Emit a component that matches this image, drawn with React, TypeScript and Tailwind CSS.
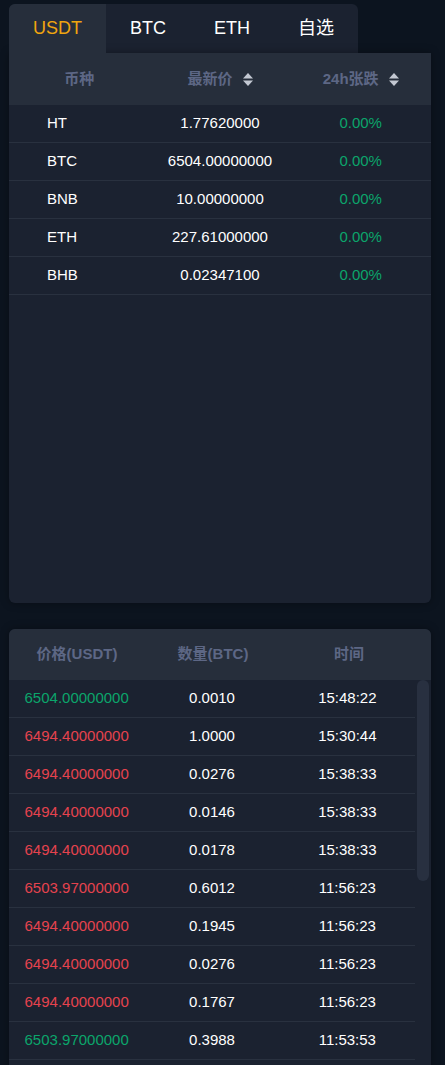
import React from 'react';

const coins = [
  { name: 'HT', price: '1.77620000', change: '0.00%' },
  { name: 'BTC', price: '6504.00000000', change: '0.00%' },
  { name: 'BNB', price: '10.00000000', change: '0.00%' },
  { name: 'ETH', price: '227.61000000', change: '0.00%' },
  { name: 'BHB', price: '0.02347100', change: '0.00%' },
];

const trades = [
  { price: '6504.00000000', up: true, amount: '0.0010', time: '15:48:22' },
  { price: '6494.40000000', up: false, amount: '1.0000', time: '15:30:44' },
  { price: '6494.40000000', up: false, amount: '0.0276', time: '15:38:33' },
  { price: '6494.40000000', up: false, amount: '0.0146', time: '15:38:33' },
  { price: '6494.40000000', up: false, amount: '0.0178', time: '15:38:33' },
  { price: '6503.97000000', up: false, amount: '0.6012', time: '11:56:23' },
  { price: '6494.40000000', up: false, amount: '0.1945', time: '11:56:23' },
  { price: '6494.40000000', up: false, amount: '0.0276', time: '11:56:23' },
  { price: '6494.40000000', up: false, amount: '0.1767', time: '11:56:23' },
  { price: '6503.97000000', up: true, amount: '0.3988', time: '11:53:53' },
];

const tabs = ['USDT', 'BTC', 'ETH', '自选'];

// up/down sort arrows
const SortIcon = () => (
  <svg width="10" height="13" viewBox="0 0 10 13" className="ml-[10px] inline-block">
    <path d="M5 0 L10 5.5 L0 5.5 Z" fill="#c3c8d2" />
    <path d="M5 13 L10 7.5 L0 7.5 Z" fill="#c3c8d2" />
  </svg>
);

const App = () => {
  return (
    <div
      className="h-[1065px] w-[445px] overflow-hidden bg-[#0c141f] pt-[4px]"
      style={{ fontFamily: '"Liberation Sans", Arial, "Noto Sans CJK SC", sans-serif' }}
    >
      {/* market panel */}
      <div className="ml-[9px] w-[422px]">
        <div className="flex w-fit overflow-hidden rounded-t-md bg-[#1b2230]">
          {tabs.map((t, i) => (
            <div
              key={t}
              className={`flex h-[49px] items-center px-[24px] text-[18px] ${
                i === 0 ? 'bg-[#262e3b] text-[#f0a50f]' : 'text-white'
              }`}
            >
              {t}
            </div>
          ))}
        </div>
        <div className="h-[550px] rounded-b-md bg-[#1b2230] shadow-[0_0_8px_rgba(0,0,0,0.35)]">
          <div className="grid h-[52px] grid-cols-3 items-center bg-[#262e3b] text-[15px] font-bold text-[#5d6785]">
            <div className="text-center">币种</div>
            <div className="flex items-center justify-center">
              最新价
              <SortIcon />
            </div>
            <div className="flex items-center justify-center">
              24h张跌
              <SortIcon />
            </div>
          </div>
          {coins.map((c) => (
            <div
              key={c.name}
              className="grid h-[38px] grid-cols-3 items-center border-b border-[#29313f] text-[15px] text-white"
            >
              <div className="pl-[38px]">{c.name}</div>
              <div className="text-center">{c.price}</div>
              <div className="text-center text-[#0ba56b]">{c.change}</div>
            </div>
          ))}
        </div>
      </div>

      {/* trades panel */}
      <div className="mt-[26px] ml-[9px] w-[422px] overflow-hidden rounded-t-md bg-[#1b2230] shadow-[0_0_8px_rgba(0,0,0,0.35)]">
        <div className="grid h-[51px] grid-cols-3 items-center bg-[#262e3b] pr-[14px] text-[15px] font-bold text-[#5d6785]">
          <div className="text-center">价格(USDT)</div>
          <div className="text-center">数量(BTC)</div>
          <div className="text-center">时间</div>
        </div>
        <div className="flex min-h-[420px]">
          <div className="w-[407px]">
            {trades.map((t, i) => (
              <div
                key={i}
                className="grid h-[38px] grid-cols-3 items-center border-b border-[#29313f] text-[15px] text-white"
              >
                <div className={`text-center ${t.up ? 'text-[#0ba56b]' : 'text-[#e5434e]'}`}>{t.price}</div>
                <div className="text-center">{t.amount}</div>
                <div className="text-center">{t.time}</div>
              </div>
            ))}
          </div>
          <div className="flex-1 px-[2px]">
            <div className="h-[201px] w-[12px] rounded-full bg-[#283040]" />
          </div>
        </div>
      </div>
    </div>
  );
};

export default App;
